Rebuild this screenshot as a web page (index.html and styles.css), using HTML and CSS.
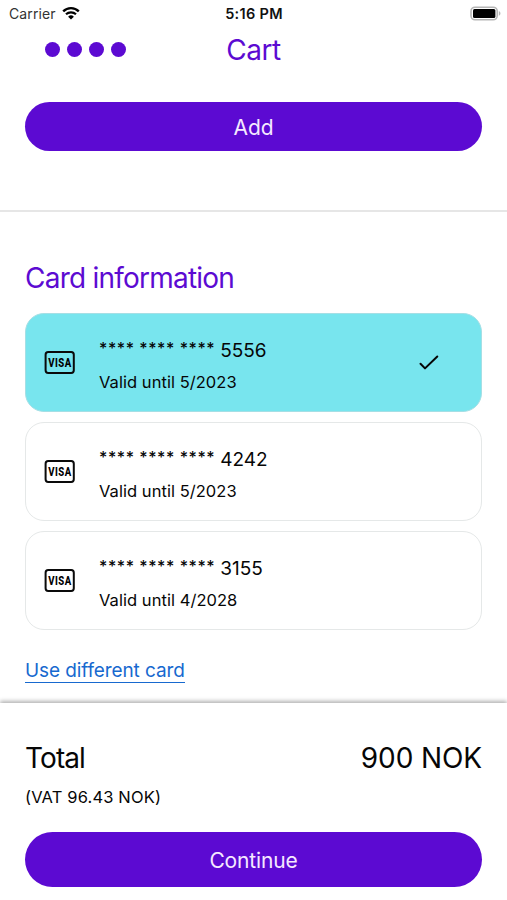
FILE: index.html
```html
<!DOCTYPE html>
<html lang="en">
<head>
  <meta charset="UTF-8">
  <meta name="viewport" content="width=device-width, initial-scale=1">
  <title>Cart</title>
  <link rel="stylesheet" href="styles.css">
</head>
<body>

<!-- Status bar -->
<div class="status-bar">
  <div class="carrier">
    <span>Carrier</span>
    <svg class="wifi" viewBox="0 0 18 14">
      <path d="M1.2 5.3a11.2 11.2 0 0 1 15.6 0" fill="none" stroke="#000" stroke-width="2.4"/>
      <path d="M4 8.3a7.2 7.2 0 0 1 10 0" fill="none" stroke="#000" stroke-width="2.2"/>
      <path d="M9 13.6L6.1 10.7a4.1 4.1 0 0 1 5.8 0z"/>
    </svg>
  </div>
  <time class="clock">5:16 PM</time>
  <svg class="battery" viewBox="0 0 32 16">
    <rect x="2" y="1.2" width="26.2" height="12.6" rx="4" fill="#fff" stroke="#b5b5b5" stroke-width="1.6"/>
    <rect x="4" y="3" width="22.4" height="9" rx="1.5"/>
    <path d="M29.8 5.1c2.2 1 2.2 3.8 0 4.8z" fill="#b5b5b5"/>
  </svg>
</div>

<header>
  <div class="dots"><i></i><i></i><i></i><i></i></div>
  <h1>Cart</h1>
</header>

<main>
  <section class="add">
    <button class="btn">Add</button>
  </section>

  <!-- Saved cards -->
  <section class="cards">
    <h2>Card information</h2>
    <ul>
      <li class="card selected">
        <svg class="visa" viewBox="0 0 32 24">
          <rect x="1.6" y="1.1" width="28.2" height="20.8" rx="2.6"/>
          <text x="4.3" y="16.2" textLength="23.4" lengthAdjust="spacingAndGlyphs">VISA</text>
        </svg>
        <div class="details">
          <p class="number"><span class="mask">**** **** ****</span> <span>5556</span></p>
          <p class="valid">Valid until 5/2023</p>
        </div>
        <svg class="check" viewBox="0 0 20 16">
          <path d="M1.5 8.8L6 13.4 18.3 1.5"/>
        </svg>
      </li>
      <li class="card">
        <svg class="visa" viewBox="0 0 32 24">
          <rect x="1.6" y="1.1" width="28.2" height="20.8" rx="2.6"/>
          <text x="4.3" y="16.2" textLength="23.4" lengthAdjust="spacingAndGlyphs">VISA</text>
        </svg>
        <div class="details">
          <p class="number"><span class="mask">**** **** ****</span> <span>4242</span></p>
          <p class="valid">Valid until 5/2023</p>
        </div>
      </li>
      <li class="card">
        <svg class="visa" viewBox="0 0 32 24">
          <rect x="1.6" y="1.1" width="28.2" height="20.8" rx="2.6"/>
          <text x="4.3" y="16.2" textLength="23.4" lengthAdjust="spacingAndGlyphs">VISA</text>
        </svg>
        <div class="details">
          <p class="number"><span class="mask">**** **** ****</span> <span>3155</span></p>
          <p class="valid">Valid until 4/2028</p>
        </div>
      </li>
    </ul>
    <a class="link" href="#">Use different card</a>
  </section>
</main>

<!-- Total and checkout -->
<footer>
  <div class="total">
    <span class="total-label">Total</span>
    <span class="total-sum">900 NOK</span>
  </div>
  <p class="vat">(VAT 96.43 NOK)</p>
  <button class="btn btn-large">Continue</button>
</footer>

</body>
</html>
```

FILE: styles.css
```css
* { box-sizing: border-box; margin: 0; padding: 0; }
body {
  display: flex; flex-direction: column; height: 900px; overflow: hidden;
  font-family: Inter, sans-serif; background: #fff; color: #060606;
}

.status-bar {
  display: grid; grid-template-columns: 1fr auto 1fr; align-items: center;
  height: 27px; padding: 0 6px 0 9px; font-size: 14px;
}
.carrier { display: flex; align-items: center; gap: 6px; letter-spacing: 0.1px; color: #333; }
.wifi { width: 18px; height: 14px; margin-top: -2px; }
.clock { margin-right: 2px; font-weight: 600; font-size: 14.5px; letter-spacing: 0.3px; color: #111; }
.battery { width: 32px; height: 16px; justify-self: end; }

header {
  display: grid; grid-template-columns: 1fr auto 1fr; align-items: center;
  height: 45px; padding: 0 26px;
}
.dots { display: flex; gap: 7px; padding-left: 19px; }
.dots i { width: 15px; height: 15px; border-radius: 50%; background: #5c0ad2; }
h1, h2 { font-weight: 400; font-size: 28px; line-height: 34px; letter-spacing: -0.77px; color: #5c0ad2; }
h1 { letter-spacing: -0.5px; }

main { flex: 1; min-height: 0; }
.add { height: 140px; padding: 30px 25px 0; border-bottom: 2px solid #e6e6e6; }
.btn {
  display: block; width: 100%; height: 49px; padding-top: 1px; border: none; border-radius: 28px;
  background: #5c0ad2; color: #f5e9ff; font-family: inherit; font-size: 21px;
  letter-spacing: -0.15px; cursor: pointer;
}
.btn-large { height: 55px; padding-top: 2px; }

.cards { padding: 49px 25px 0; }
.cards ul { display: flex; flex-direction: column; gap: 10px; margin-top: 18px; list-style: none; }
.card {
  display: flex; align-items: center; height: 99px; padding: 0 42px 0 18px;
  border: 1.5px solid #e5e8e8; border-radius: 19px;
}
.card.selected { background: #78e5ee; border-color: #a5dfe5; }
.visa { width: 32px; height: 24px; overflow: visible; }
.visa rect { fill: none; stroke: #0a0a0a; stroke-width: 2; }
.visa text { font-family: "Roboto", sans-serif; font-size: 12.5px; font-weight: 800; letter-spacing: 0.6px; }
.details { flex: 1; margin-left: 23px; padding-top: 6px; }
.number { display: flex; gap: 5px; font-size: 19px; line-height: 26px; }
.mask { font-size: 16px; font-weight: 500; line-height: 21px; letter-spacing: 0.55px; }
.valid { margin-top: 6px; font-size: 16.5px; line-height: 24px; letter-spacing: 0.05px; }
.check { width: 20px; height: 16px; }
.check path { fill: none; stroke: #060606; stroke-width: 2; stroke-linecap: round; stroke-linejoin: round; }

.link {
  display: inline-block; margin-top: 29px; border-bottom: 1.5px solid #1769cf;
  color: #1769cf; font-size: 19px; line-height: 23px; letter-spacing: -0.1px; text-decoration: none;
}

footer { height: 197px; padding: 37px 25px 0; background: #fff; box-shadow: 0 -2px 4px rgba(0, 0, 0, 0.3); }
.total { display: flex; justify-content: space-between; font-size: 28px; line-height: 36px; }
.total-label { letter-spacing: -0.9px; }
.total-sum { letter-spacing: -0.1px; }
.vat { margin: 10px 0 23px; font-size: 16.5px; line-height: 23px; letter-spacing: 0.15px; }
```
